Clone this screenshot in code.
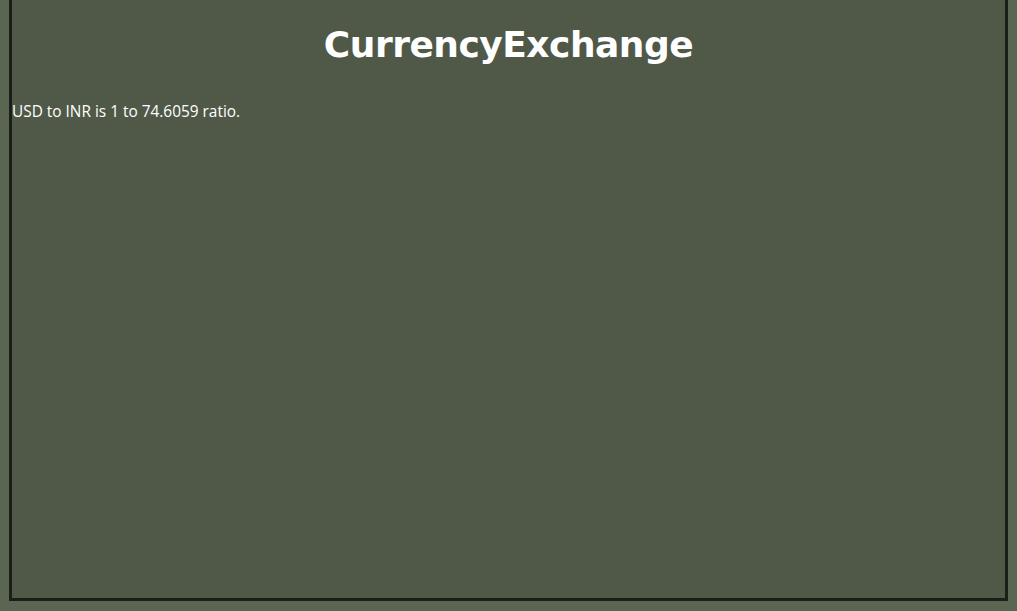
export default function App() {
  return (
    <div className="h-[611px] w-full overflow-hidden bg-[#5a6652] pl-[9px] pr-[9px]">
      <div className="-mt-[3px] h-[604px] border-[3px] border-[#1a1f17] bg-[#505948]">
        <h1 className="pt-[23px] text-center font-['DejaVu_Sans',sans-serif] text-[36px] leading-[44px] font-bold tracking-[-0.5px] text-white">
          CurrencyExchange
        </h1>
        <p className="mt-[35px] font-['Open_Sans',sans-serif] text-[15.4px] leading-[20px] text-white">
          USD to INR is 1 to 74.6059 ratio.
        </p>
      </div>
    </div>
  );
}
